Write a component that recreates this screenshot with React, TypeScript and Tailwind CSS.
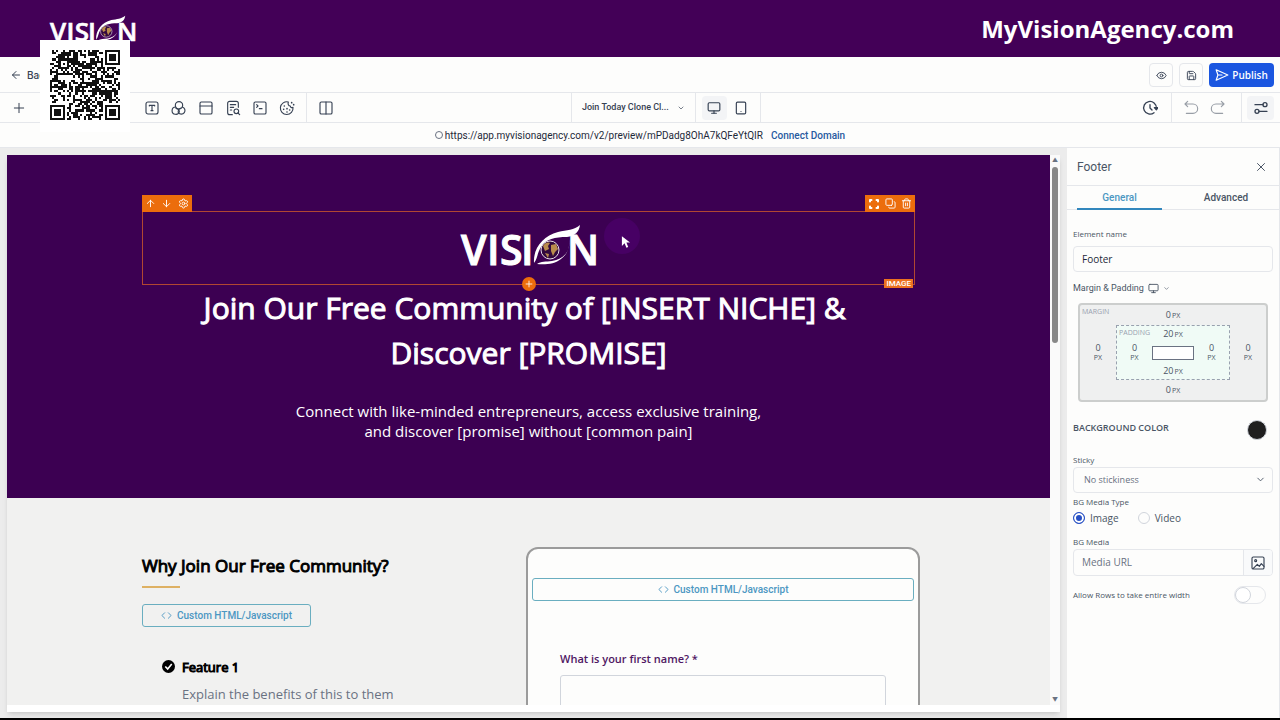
import type { ReactNode } from "react"
import {
  ArrowDown,
  ArrowLeft,
  ArrowUp,
  ChevronDown,
  Code,
  Columns2,
  Copy,
  Eye,
  Monitor,
  PanelTop,
  Plus,
  Save,
  Settings,
  SquareTerminal,
  Tablet,
  Trash2,
  X,
} from "lucide-react"

function Logo({ className }: { className: string }) {
  return (
    <svg viewBox="0 0 136 48" className={`overflow-visible ${className}`} role="img" aria-label="Vision">
      <g fill="#fff" stroke="#fff" strokeWidth="1" fontFamily="Open Sans, sans-serif" fontWeight="600" fontSize="41">
        <text x="0" y="41">V</text>
        <text x="26" y="41">I</text>
        <text x="39" y="41">S</text>
        <text x="60" y="41">I</text>
        <text x="106" y="41">N</text>
      </g>
      <path d="M73 39C72 24 82 12 97 8C106 6 113 6 119 1C118 8 114 12 106 13C94 13 85 15 80 23C76 29 77 34 73 39Z" fill="#fff" />
      <path d="M108 15C110 27 103 35 91 37C85 38 80 37 76 40C84 41 94 40 100 35C107 30 109 23 108 15Z" fill="#fff" />
      <circle cx="89" cy="26" r="9" fill="#32083e" stroke="#e8dfe8" strokeWidth="1" />
      <path d="M82 22C84 18 88 18 89 19L87 22L88 25L84 27ZM90 21L95 20L97 25L94 28L92 32L90 27ZM84 29L88 30L87 34Z" fill="#b98b4d" />
    </svg>
  )
}

// 33 x 33 modules, finders in three corners and one alignment mark
function isDark(x: number, y: number) {
  const corners = [[26, 0], [0, 26], [26, 26]]
  for (const [cx, cy] of corners) {
    const dx = x - cx
    const dy = y - cy
    if (dx >= -1 && dx <= 7 && dy >= -1 && dy <= 7) {
      const d = Math.max(Math.abs(dx - 3), Math.abs(dy - 3))
      return d === 3 || d <= 1
    }
  }
  const a = Math.max(Math.abs(x - 6), Math.abs(y - 6))
  if (a <= 2) return a !== 1
  const n = Math.sin(x * 12.9898 + y * 78.233) * 43758.5453
  return n - Math.floor(n) > 0.48
}

function QrCode() {
  let d = ""
  for (let y = 0; y < 33; y++) {
    for (let x = 0; x < 33; x++) {
      if (isDark(x, y)) d += `M${x} ${y}h1v1h-1z`
    }
  }
  return (
    <svg viewBox="0 0 33 33" className="size-[70px]" shapeRendering="crispEdges" role="img" aria-label="QR code">
      <path d={d} fill="#111" />
    </svg>
  )
}

type IconProps = { className?: string; children?: ReactNode }

function Glyph({ className = "size-4", children }: IconProps) {
  return (
    <svg viewBox="0 0 24 24" className={className} fill="none" stroke="currentColor" strokeWidth="1.7" strokeLinecap="round" strokeLinejoin="round" aria-hidden="true">
      {children}
    </svg>
  )
}

const TextIcon = () => (
  <Glyph>
    <rect x="3" y="3" width="18" height="18" rx="3" />
    <path d="M8 9V8h8v1M12 8v8M10.500 16h3" />
  </Glyph>
)

const ShapesIcon = () => (
  <Glyph>
    <circle cx="12" cy="8" r="5.500" />
    <path d="M7 10.500a5.500 5.500 0 1 0 5.500 6.500a5.500 5.500 0 0 0-5-4.500" />
    <path d="M17 10.500a5.500 5.500 0 1 1-6 8.500a5.500 5.500 0 0 1 4-7" />
  </Glyph>
)

const FormIcon = () => (
  <Glyph>
    <path d="M11 22H7a3 3 0 0 1-3-3V5a3 3 0 0 1 3-3h10a3 3 0 0 1 3 3v6M8 7h8M8 11h5M8 15h2" />
    <circle cx="17" cy="17" r="3.500" />
    <path d="m19.500 19.500 2.500 2.500" />
  </Glyph>
)

const CookieIcon = () => (
  <Glyph>
    <path d="M14 3a9.500 9.500 0 1 0 7 8c-2 1-4 0-4-2-3 0-4-3-3-6Z" />
    <path d="M8 9h.010M7 14h.010M12 13h.010M12 18h.010M16 15h.010M19 4h.010M22 7h.010" strokeWidth="2.500" />
  </Glyph>
)

const HistoryIcon = () => (
  <Glyph>
    <path d="M18 19A9.500 9.500 0 1 1 21.500 12M12 7v5l3 3" strokeWidth="2" />
    <path d="M18.500 11.500h5.500l-2.500 3.500Z" fill="currentColor" />
  </Glyph>
)

const UndoIcon = () => (
  <Glyph>
    <path d="M7 10 3 6l4-4M3 6h12a6 6 0 0 1 0 14H5" />
  </Glyph>
)

const RedoIcon = () => (
  <Glyph>
    <path d="m17 10 4-4-4-4M21 6H9a6 6 0 0 0 0 14h10" />
  </Glyph>
)

const SlidersIcon = () => (
  <Glyph>
    <path d="M3 7h12M9 17h12" strokeWidth="2" />
    <circle cx="18" cy="7" r="3" strokeWidth="2" />
    <circle cx="6" cy="17" r="3" strokeWidth="2" />
  </Glyph>
)

const SendIcon = () => (
  <Glyph className="size-3.5">
    <path d="M2 3 22 12 2 21l3-9ZM5 12h7" strokeWidth="2" />
  </Glyph>
)

const GridIcon = () => (
  <Glyph className="size-3">
    <path d="M4 7V4h3M17 4h3v3M4 17v3h3M20 17v3h-3" strokeWidth="4" />
  </Glyph>
)

const ImageIcon = () => (
  <Glyph>
    <rect x="3" y="3" width="18" height="18" rx="2" />
    <circle cx="8.500" cy="8.500" r="1.500" />
    <path d="m5 20 6-6 3 3 3-4 4 4" />
  </Glyph>
)

function ToolButton({ label, children }: { label: string; children: ReactNode }) {
  return (
    <button aria-label={label} className="flex h-6 w-[27px] items-center justify-center text-gray-700">
      {children}
    </button>
  )
}

function CustomCode({ className }: { className: string }) {
  return (
    <button className={`flex h-[23px] items-center justify-center gap-[5px] rounded-[3px] border border-[#6aaec0] font-['Roboto',sans-serif] text-[10px] font-medium text-[#4c97c2] ${className}`}>
      <Code className="size-[11px]" />
      Custom HTML/Javascript
    </button>
  )
}

function TopBanner() {
  return (
    <header className="relative flex h-[57px] shrink-0 items-center justify-between bg-[#430057] pr-[46px] pl-[50px]">
      <Logo className="mt-1 w-[86px]" />
      <div className="font-['Open_Sans',sans-serif] text-[24px] leading-8 font-bold text-white">MyVisionAgency.com</div>
      <div className="absolute top-10 left-10 z-10 flex h-[92px] w-[90px] justify-center bg-white pt-[10px]">
        <QrCode />
      </div>
    </header>
  )
}

function ActionBar() {
  return (
    <div className="flex h-[36px] shrink-0 items-center border-b border-gray-200 pt-px pr-[6px] pl-[10px]">
      <button className="flex items-center gap-[5px] text-[10px] font-medium text-gray-700">
        <ArrowLeft className="size-3" />
        Back
      </button>
      <div className="ml-auto flex items-center gap-[6px]">
        <button aria-label="Preview" className="flex size-6 items-center justify-center rounded border border-gray-200 text-gray-700">
          <Eye className="size-[11px]" />
        </button>
        <button aria-label="Save" className="flex size-6 items-center justify-center rounded border border-gray-200 text-gray-700">
          <Save className="size-[11px]" />
        </button>
        <button className="flex h-6 w-[65px] items-center justify-center gap-[3px] rounded bg-[#1b56e0] font-['Open_Sans',sans-serif] text-[10px] font-semibold text-white">
          <SendIcon />
          Publish
        </button>
      </div>
    </div>
  )
}

function Toolbar() {
  return (
    <div className="grid h-[30px] shrink-0 grid-cols-[1.1fr_auto_1fr] border-b border-gray-200">
      <div className="flex items-center pl-[5px]">
        <ToolButton label="Add element"><Plus className="size-4" strokeWidth={1.5} /></ToolButton>
        <ToolButton label="Layers"><Glyph><path d="M5 6h14M5 12h14M5 18h14" /></Glyph></ToolButton>
        <div className="ml-[79px] flex items-center">
          <ToolButton label="Text"><TextIcon /></ToolButton>
          <ToolButton label="Shapes"><ShapesIcon /></ToolButton>
          <ToolButton label="Section"><PanelTop className="size-4" strokeWidth={1.7} /></ToolButton>
          <ToolButton label="Form"><FormIcon /></ToolButton>
          <ToolButton label="Code"><SquareTerminal className="size-4" strokeWidth={1.7} /></ToolButton>
          <ToolButton label="Cookies"><CookieIcon /></ToolButton>
        </div>
        <div className="ml-[6px] flex h-full items-center border-l border-gray-200 pl-[5px]">
          <ToolButton label="Columns"><Columns2 className="size-4" strokeWidth={1.7} /></ToolButton>
        </div>
      </div>
      <div className="flex border-x border-gray-200">
        <button className="flex w-[124px] items-center justify-between border-r border-gray-200 px-2.5 font-['Roboto',sans-serif] text-[9px] font-medium text-gray-700">
          Join Today Clone Cl...
          <ChevronDown className="size-2" />
        </button>
        <div className="flex items-center gap-[2px] px-[6px] text-gray-700">
          <button aria-label="Desktop" className="flex h-6 w-[25px] items-center justify-center rounded bg-gray-100">
            <Monitor className="size-[14px]" />
          </button>
          <button aria-label="Tablet" className="flex h-6 w-[25px] items-center justify-center">
            <Tablet className="size-[14px]" />
          </button>
        </div>
      </div>
      <div className="flex items-center justify-end pr-[6px]">
        <ToolButton label="History"><HistoryIcon /></ToolButton>
        <div className="ml-2 flex h-full items-center border-l border-gray-200 pr-[10px] pl-[5px]">
          <div className="flex opacity-50">
            <ToolButton label="Undo"><UndoIcon /></ToolButton>
            <ToolButton label="Redo"><RedoIcon /></ToolButton>
          </div>
        </div>
        <div className="flex h-full items-center border-l border-gray-200 pl-[5px]">
          <div className="rounded bg-gray-100">
            <ToolButton label="Settings"><SlidersIcon /></ToolButton>
          </div>
        </div>
      </div>
    </div>
  )
}

function SelectedImage() {
  return (
    <div className="relative flex h-[74px] items-center justify-center border border-[#b14731]">
      <div className="absolute bottom-full -left-px flex h-[17px] w-[50px] items-center justify-around bg-[#ec6d0c] text-white">
        <button aria-label="Move up"><ArrowUp className="size-[11px]" /></button>
        <button aria-label="Move down"><ArrowDown className="size-[11px]" /></button>
        <button aria-label="Settings"><Settings className="size-[11px]" /></button>
      </div>
      <div className="absolute -right-px bottom-full flex h-[17px] w-[50px] items-center justify-around bg-[#ec6d0c] text-white">
        <button aria-label="Resize"><GridIcon /></button>
        <button aria-label="Duplicate"><Copy className="size-[11px] -scale-x-100 -scale-y-100" /></button>
        <button aria-label="Delete"><Trash2 className="size-[11px]" /></button>
      </div>
      <Logo className="w-[136px]" />
      <button aria-label="Add below" className="absolute -bottom-[7px] left-1/2 flex size-[14px] -translate-x-1/2 items-center justify-center rounded-full bg-[#ec6d0c] text-white">
        <Plus className="size-[10px]" />
      </button>
      <span className="absolute right-px -bottom-1 bg-[#ec7220] px-[2px] font-['Roboto',sans-serif] text-[8px] leading-[9px] font-medium text-white">IMAGE</span>
      <div className="absolute top-[6px] left-[461px] size-9 rounded-full bg-[#470064]">
        <svg viewBox="0 0 10 15" className="absolute top-[17px] left-[17px] h-[14px] w-[9px]" aria-hidden="true">
          <path d="M1 1v11l3-3 2 5 2-1-2-5h4Z" fill="#fff" />
        </svg>
      </div>
    </div>
  )
}

function Canvas() {
  return (
    <main className="flex min-h-0 min-w-0 flex-1 flex-col bg-[#ececec] pt-[7px] pr-[7px] pb-[6px] pl-[7px]">
      <div className="flex min-h-0 flex-1 bg-white pb-[7px] shadow-md">
        <div className="min-w-0 flex-1 overflow-hidden bg-[#f1f1f0] font-['Open_Sans',sans-serif]">
          <section className="bg-[#3c0052] px-[135px] pt-14 pb-[57px] text-center text-white">
            <SelectedImage />
            <h1 className="text-[30px] leading-[45px] [-webkit-text-stroke:1px_currentColor]">
              Join Our Free Community of [INSERT NICHE] &amp;&nbsp;<br />Discover [PROMISE]
            </h1>
            <p className="mt-[26px] text-[15px] leading-5">
              Connect with like-minded entrepreneurs, access exclusive training,<br />and discover [promise] without [common pain]
            </p>
          </section>
          <section className="flex justify-between pt-[49px] pr-[130px] pl-[135px]">
            <div className="pt-[5px]">
              <h2 className="text-[17px] leading-7 text-black [-webkit-text-stroke:1px_currentColor]">Why Join Our Free Community?</h2>
              <div className="mt-[6px] h-[2px] w-[38px] bg-[#deb163]" />
              <CustomCode className="mt-[16px] w-[169px]" />
              <div className="mt-[28px] flex gap-[7px] pl-[20px]">
                <svg viewBox="0 0 16 16" className="mt-[5px] size-[13px]" aria-hidden="true">
                  <circle cx="8" cy="8" r="8" fill="#000" />
                  <path d="m4 8 3 3 5-6" fill="none" stroke="#fff" strokeWidth="2" />
                </svg>
                <div>
                  <h3 className="text-[13px] leading-6 text-black [-webkit-text-stroke:1px_currentColor]">Feature 1</h3>
                  <p className="mt-[3px] text-[13px] leading-6 text-gray-500">Explain the benefits of this to them</p>
                </div>
              </div>
            </div>
            <div className="h-80 w-[394px] rounded-xl border-2 border-[#9b9b9b] bg-[#fdfdfc] px-1 pt-[29px]">
              <CustomCode className="w-full" />
              <div className="px-7 pt-12">
                <label htmlFor="first-name" className="block text-[11px] leading-5 font-semibold text-[#4f1763]">What is your first name? *</label>
                <input id="first-name" className="mt-[6px] h-10 w-full rounded-[3px] border border-gray-300 px-2 text-sm" />
              </div>
            </div>
          </section>
        </div>
        <div className="flex w-[10px] flex-col items-center justify-between bg-[#fafafa] text-[6px] leading-[10px] text-gray-500" aria-hidden="true">
          <span>▲</span>
          <div className="mt-[2px] mb-auto h-[32%] w-[6px] rounded-full bg-[#888]" />
          <span>▼</span>
        </div>
      </div>
    </main>
  )
}

function Spacing({ value, stacked }: { value: number; stacked?: boolean }) {
  return (
    <div className={stacked ? "flex flex-col items-center leading-[10px]" : "flex items-baseline gap-px leading-[11px]"}>
      <span className="text-[9px]">{value}</span>
      <span className="text-[7px]">PX</span>
    </div>
  )
}

function BoxModel() {
  return (
    <div className="relative mx-[5px] mt-2 grid h-[99px] grid-cols-[36px_1fr_36px] grid-rows-[20px_1fr_20px] place-items-center rounded-sm border-2 border-[#cccecd] bg-[#eff0f0] text-gray-600">
      <span className="absolute top-[2px] left-[2px] text-[7px] leading-[10px] text-gray-400">MARGIN</span>
      <div className="col-span-3"><Spacing value={0} /></div>
      <Spacing value={0} stacked />
      <div className="relative grid size-full grid-cols-[35px_1fr_35px] grid-rows-[1fr_auto_1fr] place-items-center border border-dashed border-gray-400 bg-[#f0fbf6]">
        <span className="absolute top-[2px] left-[2px] text-[7px] leading-[10px] text-gray-400">PADDING</span>
        <div className="col-span-3"><Spacing value={20} /></div>
        <Spacing value={0} stacked />
        <div className="h-[14px] w-full border border-gray-500 bg-white" />
        <Spacing value={0} stacked />
        <div className="col-span-3"><Spacing value={20} /></div>
      </div>
      <Spacing value={0} stacked />
      <div className="col-span-3"><Spacing value={0} /></div>
    </div>
  )
}

function SettingsPanel() {
  return (
    <aside className="flex w-[213px] shrink-0 flex-col border-r border-gray-200 bg-[#fdfdfc] font-['Roboto',sans-serif] text-gray-600">
      <div className="flex h-[38px] items-center justify-between border-b border-gray-200 pr-[11px] pl-[10px]">
        <h2 className="text-[12px]">Footer</h2>
        <button aria-label="Close"><X className="size-3.5" strokeWidth={1.7} /></button>
      </div>
      <div className="grid h-[24px] grid-cols-2 border-b border-gray-200 text-[10px] font-medium">
        <button className="mr-[11px] -mb-px ml-[10px] border-b-2 border-[#3287bd] text-[#4c97c2]">General</button>
        <button>Advanced</button>
      </div>
      <div className="flex flex-col pt-[17px] pr-[6px] pl-[6px] font-['Open_Sans',sans-serif]">
        <label htmlFor="element-name" className="text-[8px] leading-[14px] font-medium">Element name</label>
        <input id="element-name" defaultValue="Footer" className="mt-[5px] h-[26px] rounded border border-gray-200 px-2 text-[10px] text-gray-800" />
        <div className="mt-[9px] flex items-center gap-1 font-['Roboto',sans-serif] text-[9px] leading-[14px]">
          Margin &amp; Padding
          <Monitor className="size-[11px]" />
          <ChevronDown className="size-[7px]" />
        </div>
        <BoxModel />
        <div className="mt-[17px] flex h-[22px] items-center justify-between pr-[6px] text-[9px] leading-[18px] font-semibold">
          <span className="self-start">BACKGROUND COLOR</span>
          <button aria-label="Background color" className="size-5 rounded-full border border-gray-300 bg-[#1f1f1f]" />
        </div>
        <label htmlFor="sticky" className="mt-[12px] text-[8px] leading-[14px] font-medium">Sticky</label>
        <div className="relative">
          <select id="sticky" className="block h-[26px] w-full appearance-none rounded border border-gray-200 px-[10px] text-[9px] text-gray-500">
            <option>No stickiness</option>
          </select>
          <ChevronDown className="pointer-events-none absolute top-[7px] right-[7px] size-[11px]" />
        </div>
        <fieldset className="mt-[2px] text-[10px]">
          <legend className="text-[8px] leading-[14px] font-medium">BG Media Type</legend>
          <div className="flex items-center gap-[19px] leading-[18px]">
            <label className="flex items-center gap-[5px]">
              <input type="radio" name="media" defaultChecked className="size-3 appearance-none rounded-full border border-[#2750c4] bg-[#2750c4] shadow-[inset_0_0_0_2px_#fff]" />
              Image
            </label>
            <label className="flex items-center gap-[5px]">
              <input type="radio" name="media" className="size-3 appearance-none rounded-full border border-gray-300" />
              Video
            </label>
          </div>
        </fieldset>
        <label htmlFor="media-url" className="mt-[8px] text-[8px] leading-[14px] font-medium">BG Media</label>
        <div className="flex h-[27px] overflow-hidden rounded border border-gray-200">
          <input id="media-url" placeholder="Media URL" className="min-w-0 flex-1 px-2 text-[10px] placeholder:text-gray-500" />
          <button aria-label="Choose media" className="flex w-[29px] items-center justify-center border-l border-gray-200 bg-gray-50 text-gray-700">
            <ImageIcon />
          </button>
        </div>
        <label className="mt-[10px] flex items-center justify-between pr-[7px] text-[8px] font-medium">
          Allow Rows to take entire width
          <input type="checkbox" role="switch" className="h-[18px] w-8 appearance-none rounded-full border border-gray-200 before:block before:size-4 before:rounded-full before:border before:border-gray-300 before:bg-white" />
        </label>
      </div>
    </aside>
  )
}

export default function App() {
  return (
    <div className="flex h-screen flex-col overflow-hidden border-b-2 border-black bg-[#fdfdfc] font-['Inter',sans-serif]">
      <TopBanner />
      <ActionBar />
      <Toolbar />
      <div className="flex h-[25px] shrink-0 items-center justify-center border-b border-gray-200 font-['Roboto',sans-serif] text-[10px] text-gray-800">
        <span className="mr-[2px] size-2 rounded-full border border-gray-500" />
        https://app.myvisionagency.com/v2/preview/mPDadg8OhA7kQFeYtQIR
        <a href="#domain" className="ml-2 font-medium text-[#285a9f]">Connect Domain</a>
      </div>
      <div className="flex min-h-0 flex-1">
        <Canvas />
        <SettingsPanel />
      </div>
    </div>
  )
}
